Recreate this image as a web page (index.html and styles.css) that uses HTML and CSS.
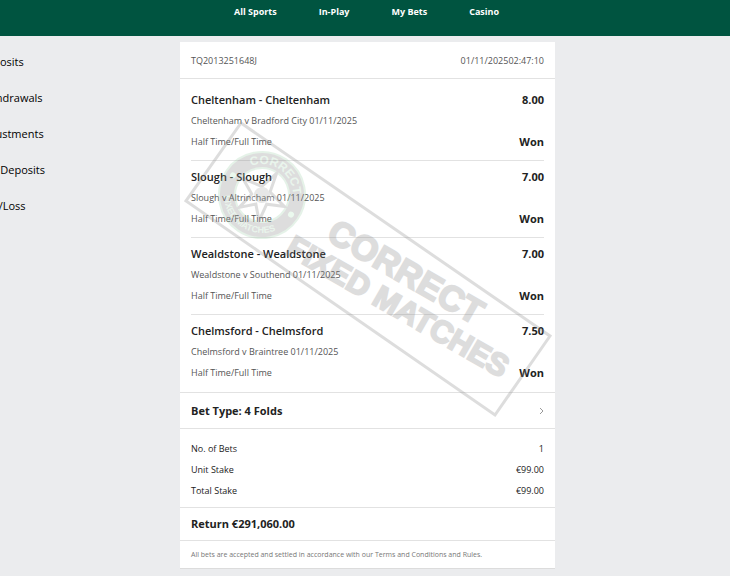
FILE: index.html
```
<!DOCTYPE html>
<html lang="en">
<head>
  <meta charset="UTF-8" />
  <meta name="viewport" content="width=device-width, initial-scale=1.0"/>
  <title>Bet History</title>
  <link rel="stylesheet" href="styles.css">
</head>
<body>
  <header class="top-bar">
    <nav class="main-nav">
      <a href="#">All Sports</a>
      <a href="#">In-Play</a>
      <a href="#">My Bets</a>
      <a href="#">Casino</a>
    </nav>
  </header>

  <div class="layout">
    <nav class="side-nav">
      <a href="#">Deposits</a>
      <a href="#">Withdrawals</a>
      <a href="#">Adjustments</a>
      <a href="#">Net Deposits</a>
      <a href="#">Win/Loss</a>
    </nav>

    <main class="slip">
      <div class="slip-head">
        <span>TQ2013251648J</span>
        <span class="slip-date"><span>01/11/2025</span><span>02:47:10</span></span>
      </div>

      <div class="selections">
        <section class="selection">
          <div class="row title"><h2>Cheltenham - Cheltenham</h2><b>8.00</b></div>
          <div class="row">Cheltenham v Bradford City 01/11/2025</div>
          <div class="row"><span>Half Time/Full Time</span><b>Won</b></div>
        </section>
        <section class="selection">
          <div class="row title"><h2>Slough - Slough</h2><b>7.00</b></div>
          <div class="row">Slough v Altrincham 01/11/2025</div>
          <div class="row"><span>Half Time/Full Time</span><b>Won</b></div>
        </section>
        <section class="selection">
          <div class="row title"><h2>Wealdstone - Wealdstone</h2><b>7.00</b></div>
          <div class="row">Wealdstone v Southend 01/11/2025</div>
          <div class="row"><span>Half Time/Full Time</span><b>Won</b></div>
        </section>
        <section class="selection">
          <div class="row title"><h2>Chelmsford - Chelmsford</h2><b>7.50</b></div>
          <div class="row">Chelmsford v Braintree 01/11/2025</div>
          <div class="row"><span>Half Time/Full Time</span><b>Won</b></div>
        </section>
      </div>

      <button type="button" class="bet-type">
        <span>Bet Type: 4 Folds</span>
        <svg width="5" height="8" viewBox="0 0 5 8"><path d="M1 1l3 3-3 3" fill="none" stroke="#999" stroke-width="1"/></svg>
      </button>

      <dl class="totals">
        <div class="total"><dt>No. of Bets</dt><dd>1</dd></div>
        <div class="total"><dt>Unit Stake</dt><dd>€99.00</dd></div>
        <div class="total"><dt>Total Stake</dt><dd>€99.00</dd></div>
      </dl>

      <div class="return">Return €291,060.00</div>
      <p class="terms">All bets are accepted and settled in accordance with our Terms and Conditions and Rules.</p>

      <!-- Stamp over the slip -->
      <svg class="stamp" viewBox="0 0 375 526" aria-hidden="true">
        <defs>
          <path id="arcTop" d="M-31 0A31 31 0 0 1 31 0"/>
          <path id="arcBottom" d="M-38 0A38 38 0 0 0 38 0"/>
        </defs>
        <path class="stamp-frame" d="M61 81L370 294L315 373L6 159Z"/>
        <g transform="translate(82 153) rotate(34)">
          <circle class="badge-ring" r="35"/>
          <circle class="badge-edge" r="43"/>
          <circle class="badge-edge" r="27"/>
          <path class="badge-star" d="M0-26L5-7L25-3L9 5L12 23L0 11L-12 23L-9 5L-25-3L-5-7Z"/>
          <circle class="badge-core" r="8"/>
          <circle class="badge-dot" cx="-35" cy="0" r="3"/>
          <circle class="badge-dot" cx="35" cy="0" r="3"/>
          <text class="badge-text"><textPath href="#arcTop" startOffset="50%">CORRECT</textPath></text>
          <text class="badge-text small"><textPath href="#arcBottom" startOffset="50%">FIXED MATCHES</textPath></text>
        </g>
        <g class="stamp-text">
          <text font-size="35" transform="translate(145 197) rotate(30)">CORRECT</text>
          <text font-size="31" transform="translate(104 211) rotate(30)">FIXED MATCHES</text>
        </g>
      </svg>
    </main>
  </div>
</body>
</html>
```
FILE: styles.css
```
* {
  box-sizing: border-box;
}
body {
  margin: 0;
  min-height: 100vh;
  background: #ebecee;
  color: #222;
  font-family: "Open Sans", "Noto Sans", sans-serif;
  font-size: 9px;
  overflow-x: hidden;
}
a {
  color: inherit;
  text-decoration: none;
}
.top-bar {
  background: #005440;
  height: 36px;
}
.main-nav {
  display: flex;
  justify-content: center;
  gap: 42px;
  padding-left: 3px;
  color: #fff;
  font-size: 9px;
  font-weight: bold;
  line-height: 24px;
}
.layout {
  display: grid;
  grid-template-columns: 180px minmax(0, 1fr) 175px;
  align-items: start;
  padding-top: 6px;
}
.side-nav {
  display: flex;
  flex-direction: column;
  margin-left: -21px;
  padding-top: 2px;
  color: #000;
  font-size: 11px;
  line-height: 36px;
}
.slip {
  position: relative;
  background: #fff;
  border-bottom: 1px solid #dcdcdc;
}
.slip-head {
  display: flex;
  justify-content: space-between;
  padding: 1px 11px 0;
  border-bottom: 1px solid #e2e2e2;
  color: #555;
  line-height: 35px;
}
.selections {
  padding: 5px 11px 1px;
  border-bottom: 1px solid #e2e2e2;
}
.selection {
  padding: 5px 0 8px;
  border-bottom: 1px solid #e2e2e2;
}
.selection:last-child {
  border-bottom: 0;
}
.row {
  display: flex;
  justify-content: space-between;
  color: #555;
  line-height: 21px;
}
.row h2,
.row b {
  margin: 0;
  color: #222;
  font-size: 11px;
  font-weight: 600;
}
.row b {
  font-weight: bold;
}
.bet-type {
  display: flex;
  justify-content: space-between;
  align-items: center;
  width: 100%;
  padding: 0 11px;
  border: 0;
  border-bottom: 1px solid #e2e2e2;
  background: none;
  color: #222;
  font: bold 11px/35px "Open Sans", "Noto Sans", sans-serif;
  cursor: pointer;
}
.totals {
  margin: 0;
  padding: 9px 11px 6px;
  border-bottom: 1px solid #e2e2e2;
  line-height: 21px;
}
.total {
  display: flex;
  justify-content: space-between;
}
.total dd {
  margin: 0;
}
.return {
  padding: 0 11px;
  border-bottom: 1px solid #e2e2e2;
  font-size: 11px;
  font-weight: bold;
  line-height: 32px;
}
.terms {
  margin: 0;
  padding: 0 11px;
  color: #777;
  font-size: 7px;
  line-height: 27px;
}

/* Stamp */
.stamp {
  position: absolute;
  top: 0;
  left: 0;
  width: 100%;
  opacity: 0.28;
  pointer-events: none;
}
.stamp-frame {
  fill: none;
  stroke: #888;
  stroke-width: 3;
}
.stamp-text {
  fill: #888;
  stroke: #888;
  stroke-width: 2;
  font-family: "Liberation Sans", sans-serif;
  font-weight: bold;
}
.badge-ring {
  fill: none;
  stroke: #888;
  stroke-width: 16;
}
.badge-edge {
  fill: none;
  stroke: #a3d3ae;
  stroke-width: 2;
}
.badge-star {
  fill: #fff;
  stroke: #888;
  stroke-width: 3;
}
.badge-core {
  fill: #aaa;
}
.badge-dot {
  fill: #b8ebc4;
}
.badge-text {
  fill: #b4dcbe;
  font-family: "Liberation Sans", sans-serif;
  font-size: 12px;
  font-weight: bold;
  text-anchor: middle;
}
.badge-text.small {
  font-size: 9px;
}
```
